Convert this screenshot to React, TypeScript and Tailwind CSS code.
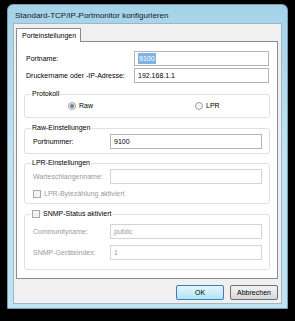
import React from 'react';

const font = "font-['Liberation_Sans',Arial,sans-serif]";

const TextInput = ({value, disabled, selected, className}: {value?: string; disabled?: boolean; selected?: boolean; className?: string}) => (
    <div className={`h-[15px] bg-white border flex items-center px-[3px] ${disabled ? 'border-[#d4d4d4] text-[#9a9a9a]' : 'border-[#b5b5b5] text-black'} ${className ?? ''}`}>
        {selected ? <span className="bg-[#7fb3e6] text-white leading-[11px] px-[1px]">{value}</span> : <span>{value}</span>}
    </div>
);

const Radio = ({checked, label}: {checked?: boolean; label: string}) => (
    <div className="flex items-center gap-[3px]">
        <span className="size-[8px] rounded-full border border-[#9aa0a6] bg-[#f4f4f4] flex items-center justify-center">
            {checked && <span className="size-[4px] rounded-full bg-[#5d8a7c]" />}
        </span>
        <span>{label}</span>
    </div>
);

const Check = ({label, disabled}: {label: string; disabled?: boolean}) => (
    <div className={`flex items-center gap-[3px] ${disabled ? 'text-[#9a9a9a]' : 'text-black'}`}>
        <span className="size-[8px] border border-[#a8a8a8] bg-[#f3f3f3]" />
        <span>{label}</span>
    </div>
);

const Group = ({legend, children, className}: {legend: React.ReactNode; children: React.ReactNode; className?: string}) => (
    <fieldset className={`mx-[7px] border border-[#dce3e8] rounded-[3px] pl-[8px] pr-[7px] ${className ?? ''}`}>
        <legend className="px-[1px] ml-[-2px] leading-[10px]">{legend}</legend>
        {children}
    </fieldset>
);

const App = () => {
    return (
        <div className={`w-[295px] h-[321px] bg-black pt-[4px] pl-[7px] text-[7px] leading-[10px] text-black whitespace-nowrap ${font}`}>
            <div className="w-[281px] h-[305px] rounded-t-[6px] bg-gradient-to-b from-[#a4d3e8] via-[#c2e3f0] to-[#bfe3f0] border border-[#7d9bb0] flex flex-col">
                <div className="h-[19px] flex items-center pt-[4px] pl-[7px] text-[8px] text-[#1a1a1a]">
                    Standard-TCP/IP-Portmonitor konfigurieren
                </div>
                <div className="flex-1 mx-[5px] mb-[4px] bg-[#f0f0f0] border border-[#9fb6c4] pt-[4px] pl-[2px] pr-[3px] pb-[3px] flex flex-col">
                    <div className="flex">
                        <div className="h-[14px] w-[65px] bg-white border border-b-0 border-[#898c95] flex items-center pl-[5px] mb-[-1px] relative">
                            Porteinstellungen
                        </div>
                    </div>
                    <div className="h-[238px] bg-white border border-[#898c95] flex flex-col">
                        <div className="flex items-center mt-[9px] pl-[9px] pr-[8px]">
                            <span className="flex-1">Portname:</span>
                            <TextInput value="9100" selected className="w-[135px]" />
                        </div>
                        <div className="flex items-center mt-[2px] pl-[9px] pr-[8px]">
                            <span className="flex-1">Druckername oder -IP-Adresse:</span>
                            <TextInput value="192.168.1.1" className="w-[135px]" />
                        </div>
                        <Group legend="Protokoll" className="mt-[6px] pt-[2px] pb-[6px]">
                            <div className="flex h-[10px] items-center">
                                <div className="ml-[35px] w-[127px]"><Radio checked label="Raw" /></div>
                                <Radio label="LPR" />
                            </div>
                        </Group>
                        <Group legend="Raw-Einstellungen" className="mt-[5px] pt-[1px] pb-[4px]">
                            <div className="flex items-center">
                                <span className="flex-1">Portnummer:</span>
                                <TextInput value="9100" className="w-[152px]" />
                            </div>
                        </Group>
                        <Group legend="LPR-Einstellungen" className="mt-[4px] pt-[1px] pb-[4px]">
                            <div className="flex items-center text-[#9a9a9a]">
                                <span className="flex-1">Warteschlangenname:</span>
                                <TextInput disabled className="w-[152px]" />
                            </div>
                            <div className="mt-[5px] h-[10px] flex items-center">
                                <Check disabled label="LPR-Bytezählung aktiviert" />
                            </div>
                        </Group>
                        <Group legend={<Check label="SNMP-Status aktiviert" />} className="mt-[5px] pt-[5px] pb-[9px]">
                            <div className="flex items-center text-[#9a9a9a]">
                                <span className="flex-1">Communityname:</span>
                                <TextInput disabled value="public" className="w-[152px]" />
                            </div>
                            <div className="flex items-center text-[#9a9a9a] mt-[6px]">
                                <span className="flex-1">SNMP-Geräteindex:</span>
                                <TextInput disabled value="1" className="w-[152px]" />
                            </div>
                        </Group>
                    </div>
                    <div className="flex justify-end gap-[6px] mt-[6px]">
                        <button className="w-[48px] h-[15px] rounded-[2px] border border-[#3c7fb1] bg-gradient-to-b from-[#e3f6fd] to-[#b3e4f6] text-black">OK</button>
                        <button className="w-[48px] h-[15px] rounded-[2px] border border-[#707070] bg-gradient-to-b from-[#f4f4f4] to-[#d6d6d6] text-black">Abbrechen</button>
                    </div>
                </div>
            </div>
        </div>
    );
};

export default App;
